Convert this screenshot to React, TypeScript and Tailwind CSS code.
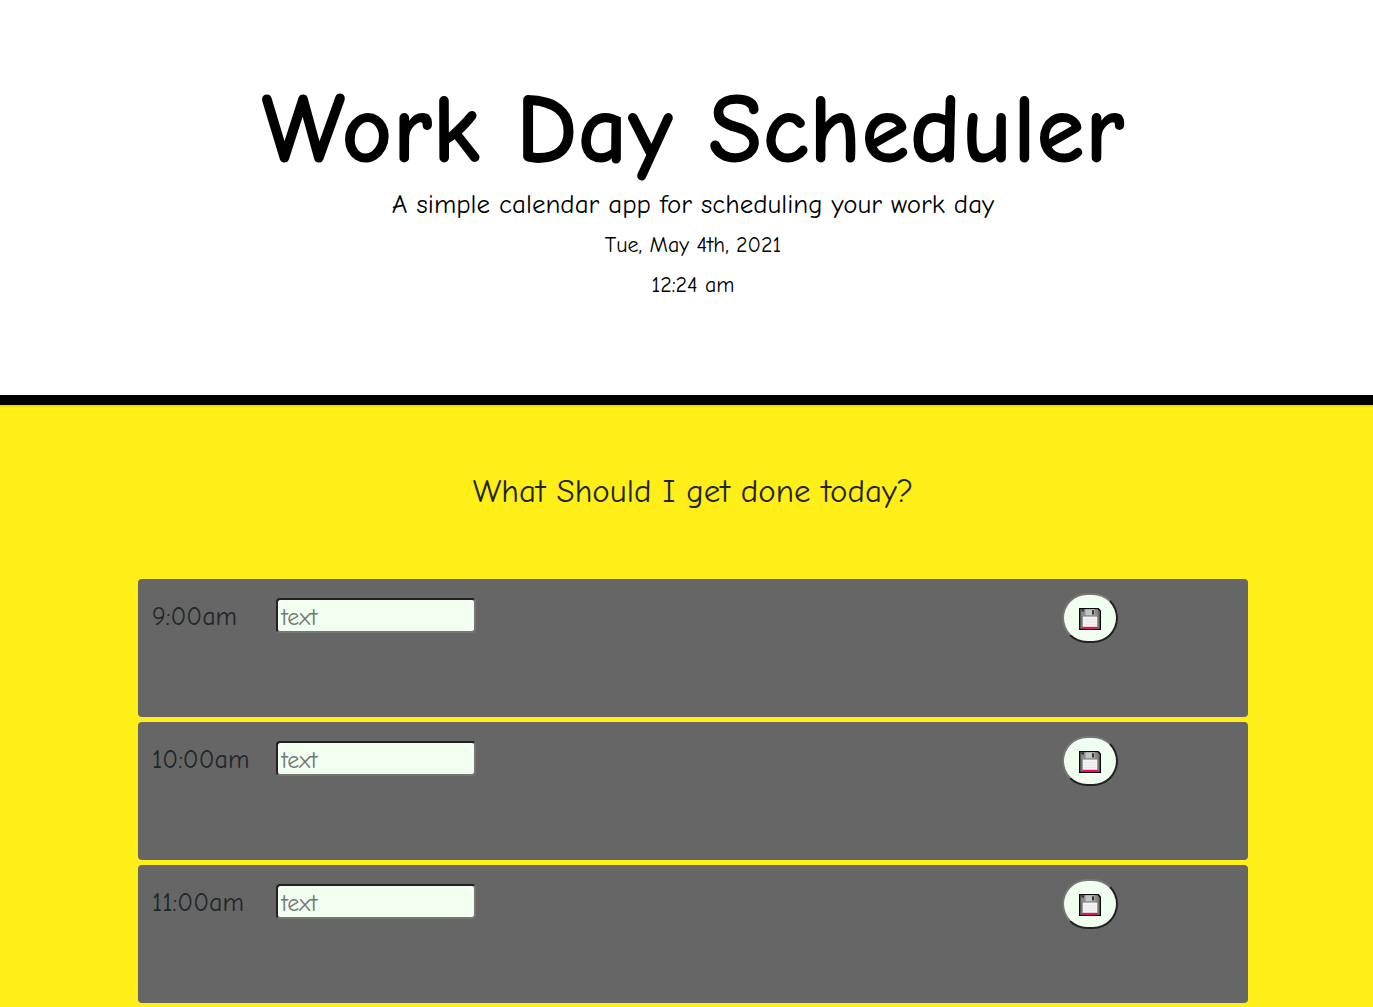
import React from "react";

const hours = ["9:00am", "10:00am", "11:00am"];

function FloppyIcon() {
  return (
    <svg width="22" height="22" viewBox="0 0 22 22" aria-hidden="true">
      <path d="M0 0H19.5L22 2.5V22H0Z" fill="#0a0a0a" />
      <path d="M1.3 1.3H18.8L20.7 3.4V20.7H1.3Z" fill="#747474" />
      <path d="M2.5 1.3H18.5V8H2.5Z" fill="#8b8b8b" />
      <path d="M2.5 1.3H5V3.5H2.5Z" fill="#333333" />
      <path d="M6.5 1.3H15.5V7.2H6.5Z" fill="#c4c4c4" />
      <path d="M13 2.3H15V6.6H13Z" fill="#333333" />
      <path d="M3.7 8.5H18.3V19H3.7Z" fill="#f4f4f4" />
      <path d="M4.5 11.5H17.5M4.5 14H17.5M4.5 16.5H17.5" stroke="#e4e4e4" strokeWidth="0.8" />
      <path d="M3.7 18.8H18.3V20.8H3.7Z" fill="#f5085f" />
    </svg>
  );
}

function HourRow({ hour }: { hour: string }) {
  const id = `task-${hour.replace(":", "-")}`;
  return (
    <li className="flex h-[138px] items-start rounded bg-[#666666] pt-3.5 pl-3.5">
      <label htmlFor={id} className="w-[124px] shrink-0 pt-2 text-[26px] leading-8 text-[#212529]">
        {hour}
      </label>
      <input
        id={id}
        type="text"
        placeholder="text"
        className="mt-[5px] h-[35px] w-[200px] rounded border-2 border-t-[#212121] border-r-[#767676] border-b-[#767676] border-l-[#212121] bg-[#f0fff0] px-[3px] pt-0.5 text-[24px] leading-7 text-[#212529] placeholder:text-[#757575]"
      />
      <button
        type="button"
        aria-label={`Save ${hour}`}
        className="mr-[130px] ml-auto flex h-[50px] w-14 items-center justify-center rounded-[25px] border-2 border-t-[#767676] border-r-[#212121] border-b-[#212121] border-l-[#767676] bg-[#f0fff0] pt-0.5"
      >
        <FloppyIcon />
      </button>
    </li>
  );
}

export default function App() {
  return (
    <div className="min-h-screen bg-[#ffee17] font-['Comic_Sans_MS','Comic_Neue','Open_Sans',sans-serif]">
      <header className="border-b-[10px] border-black bg-white pt-[75px] pb-[90px] pl-[13px] text-center text-black">
        <h1 className="text-[99px] leading-[110px] font-bold">Work Day Scheduler</h1>
        <p className="text-[27px] leading-10">A simple calendar app for scheduling your work day</p>
        <p className="text-[22px] leading-10">Tue, May 4th, 2021</p>
        <p className="text-[22px] leading-10">12:24 am</p>
      </header>
      <main className="border-t-2 border-[#f0dc00] pb-[5px] pl-[13px]">
        <h2 className="pt-16 text-center text-[33px] leading-10 text-[#212529]">
          What Should I get done today?
        </h2>
        <ul className="mx-auto mt-[68px] flex max-w-[1110px] flex-col gap-[5px]">
          {hours.map((hour) => (
            <HourRow key={hour} hour={hour} />
          ))}
        </ul>
      </main>
    </div>
  );
}
